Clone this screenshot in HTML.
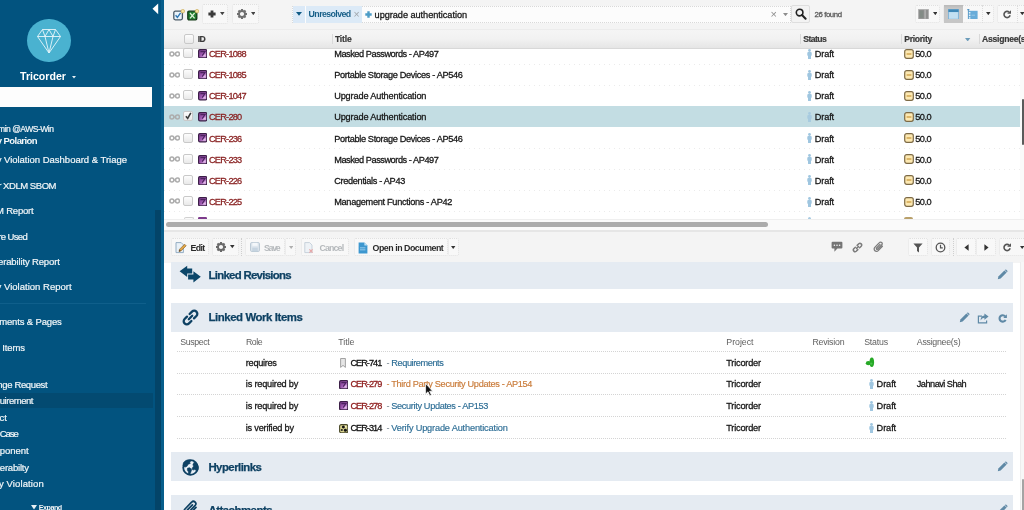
<!DOCTYPE html>
<html><head><meta charset="utf-8"><title>Polarion</title>
<style>
*{margin:0;padding:0;box-sizing:border-box}
html,body{width:1024px;height:510px;overflow:hidden;background:#fff;font-family:"Liberation Sans",sans-serif;}
.a{position:absolute}
#sb{will-change:transform;position:absolute;left:0;top:0;width:164px;height:510px;background:#02537f;overflow:hidden}
#sb .t{position:absolute;color:#f4f8fa;font-size:9.5px;white-space:nowrap;text-align:right;left:-200px;line-height:12px;height:12px}
#main{will-change:transform;position:absolute;left:164px;top:0;width:860px;height:510px;background:#fff;overflow:hidden}
.tx{position:absolute;white-space:nowrap;line-height:12px;height:12px}
.btn{position:absolute;border:1px dotted #e0e0e0;background:#f8f8f8;border-radius:2px}
.sec{position:absolute;left:7px;width:842px;background:#e3eaf3}
.hl{position:absolute;height:1px;background:#e4e4e4;left:13px;width:829px}
.cb{position:absolute;width:10px;height:10px;border:1px solid #c9c9c9;border-radius:2px;background:linear-gradient(#fdfdfd,#e9e9e9)}
</style></head><body>

<div id="sb">
<div class="a" style="left:161px;top:0;width:3px;height:510px;background:#075e8b"></div>
<div class="a" style="left:155px;top:210px;width:5.5px;height:300px;background:#034468"></div>
<svg class="a" style="left:152px;top:3px" width="7" height="12" viewBox="0 0 7 12"><path d="M6.2 0.4 L6.2 11.2 L0.5 5.8 Z" fill="#fff"/></svg>
<div class="a" style="left:27.2px;top:18.5px;width:43.6px;height:43.6px;border-radius:21.8px;background:#4ab2d0"></div>
<svg class="a" style="left:36px;top:28px" width="26" height="26" viewBox="0 0 26 26" fill="none" stroke="#e8f6fb" stroke-width="0.9" stroke-linejoin="round"><path d="M6.5 1.5 H19.5 L24.5 8.5 L13 25 L1.5 8.5 Z"/><path d="M1.5 8.5 H24.5"/><path d="M6.5 1.5 L9 8.5 L13 25 L17 8.5 L19.5 1.5"/><path d="M9 8.5 L13 1.5 L17 8.5"/></svg>
<div class="a" style="left:20px;top:69px;color:#fff;font-weight:bold;font-size:10.6px;line-height:14px;white-space:nowrap">Tricorder</div>
<svg class="a" style="left:71.6px;top:75.6px" width="4" height="3" viewBox="0 0 4 3"><path d="M0 0 H4 L2 2.6 Z" fill="#e8f0f5"/></svg>
<div class="a" style="left:0;top:87px;width:152px;height:20px;background:#fdfdfd"></div>
<div class="a" style="left:0;top:303px;width:146px;height:1px;background:#0f5f8b"></div>
<div class="a" style="left:0;top:393px;width:153px;height:15px;background:#034a71"></div>
<div class="t" style="width:253.52px;top:123.0px;font-size:8.5px;letter-spacing:-0.478px;-webkit-text-stroke:0.2px #eef3f6;">Admin @AWS-Win</div>
<div class="t" style="width:237.03px;top:135.0px;font-size:9.5px;font-weight:bold;letter-spacing:-0.572px;">My Polarion</div>
<div class="t" style="width:326.99px;top:154.0px;font-size:9.5px;letter-spacing:-0.015px;-webkit-text-stroke:0.2px #eef3f6;">Security Violation Dashboard &amp; Triage</div>
<div class="t" style="width:256.05px;top:179.5px;font-size:9.5px;letter-spacing:-0.451px;-webkit-text-stroke:0.2px #eef3f6;">Tricorder XDLM SBOM</div>
<div class="t" style="width:233.50px;top:205.0px;font-size:9.5px;letter-spacing:-0.203px;-webkit-text-stroke:0.2px #eef3f6;">SBOM Report</div>
<div class="t" style="width:227.17px;top:230.9px;font-size:9.5px;letter-spacing:-0.626px;-webkit-text-stroke:0.2px #eef3f6;">Where Used</div>
<div class="t" style="width:259.66px;top:256.0px;font-size:9.5px;letter-spacing:-0.143px;-webkit-text-stroke:0.2px #eef3f6;">Vulnerability Report</div>
<div class="t" style="width:271.61px;top:281.1px;font-size:9.5px;letter-spacing:0.012px;-webkit-text-stroke:0.2px #eef3f6;">Security Violation Report</div>
<div class="t" style="width:261.65px;top:315.8px;font-size:9.5px;letter-spacing:-0.152px;-webkit-text-stroke:0.2px #eef3f6;">Documents &amp; Pages</div>
<div class="t" style="width:224.89px;top:341.8px;font-size:9.5px;letter-spacing:-0.106px;-webkit-text-stroke:0.2px #eef3f6;">Work Items</div>
<div class="t" style="width:247.24px;top:378.5px;font-size:9.5px;letter-spacing:-0.364px;-webkit-text-stroke:0.2px #eef3f6;">Change Request</div>
<div class="t" style="width:232.92px;top:395.2px;font-size:9.5px;letter-spacing:-0.48px;-webkit-text-stroke:0.2px #eef3f6;">Requirement</div>
<div class="t" style="width:207.00px;top:411.5px;font-size:9.5px;-webkit-text-stroke:0.2px #eef3f6;">Defect</div>
<div class="t" style="width:217.74px;top:428.2px;font-size:9.5px;letter-spacing:-1.059px;-webkit-text-stroke:0.2px #eef3f6;">Test Case</div>
<div class="t" style="width:228.69px;top:445.2px;font-size:9.5px;letter-spacing:-0.011px;-webkit-text-stroke:0.2px #eef3f6;">Component</div>
<div class="t" style="width:228.80px;top:461.7px;font-size:9.5px;letter-spacing:-0.204px;-webkit-text-stroke:0.2px #eef3f6;">Vulnerabilty</div>
<div class="t" style="width:243.92px;top:477.9px;font-size:9.5px;letter-spacing:0.116px;-webkit-text-stroke:0.2px #eef3f6;">Security Violation</div>
<svg class="a" style="left:31px;top:505px" width="6" height="5" viewBox="0 0 6 5"><path d="M0 0 H6 L3 4.5 Z" fill="#e8f0f5"/></svg>
<div class="a" style="left:38.8px;top:502.6px;color:#eef3f6;font-weight:bold;font-size:7.2px;letter-spacing:-0.501px;line-height:10px;white-space:nowrap">Expand</div>
</div>
<div id="main">
<svg width="0" height="0" style="position:absolute"><defs><linearGradient id="gwi" x1="0" y1="0" x2="1" y2="1"><stop offset="0" stop-color="#7a3a8c"/><stop offset="0.45" stop-color="#9a55ac"/><stop offset="1" stop-color="#dcaae6"/></linearGradient></defs></svg>
<div class="a" style="left:0.0px;top:0.0px;width:860.0px;height:30.0px;background:#f4f4f4;"></div>
<div class="a" style="left:0.0px;top:29.0px;width:860.0px;height:1.0px;background:#ececec;"></div>
<svg class="a" style="left:8.5px;top:8.5px" width="12" height="12" viewBox="0 0 12 12"><rect x="0.8" y="2.2" width="8.6" height="8.6" rx="1.5" fill="#eaf3fa" stroke="#4a5a66" stroke-width="1.3"/><path d="M2.6 6.2 L4.4 8.4 L7.6 3.8" fill="none" stroke="#2f78b5" stroke-width="1.4"/><circle cx="9.8" cy="2.2" r="1.8" fill="#f6e3a0" stroke="#c8a64a" stroke-width="0.6"/></svg>
<svg class="a" style="left:22.5px;top:8.5px" width="12" height="12" viewBox="0 0 12 12"><rect x="0.8" y="2.2" width="9" height="8.6" rx="1.2" fill="#1f7a2d" stroke="#123a17" stroke-width="1.3"/><path d="M3 4 L7.6 9.4 M7.6 4 L3 9.4" stroke="#d9f2d5" stroke-width="1.3"/><circle cx="10" cy="2.2" r="1.8" fill="#f6e3a0" stroke="#c8a64a" stroke-width="0.6"/></svg>
<div class="btn" style="left:38.4px;top:4.3px;width:26.1px;height:19.3px;"></div>
<svg class="a" style="left:43.6px;top:10.2px" width="8" height="8" viewBox="0 0 8 8"><path d="M2.6 0.4 H5.4 V2.6 H7.6 V5.4 H5.4 V7.6 H2.6 V5.4 H0.4 V2.6 H2.6 Z" fill="#3a3a3a"/></svg>
<svg class="a" style="left:56.3px;top:11.9px" width="4.6" height="3.2" viewBox="0 0 4.6 3.2"><path d="M0 0 H4.6 L2.3 3.2 Z" fill="#444"/></svg>
<div class="btn" style="left:68.2px;top:4.3px;width:26.6px;height:19.3px;"></div>
<svg class="a" style="left:71.6px;top:8.0px" width="12" height="12" viewBox="0 0 12 12"><g transform="translate(6 6)"><rect x="-1.05" y="-5.0" width="2.1" height="2.4" transform="rotate(0)" fill="#707070"/><rect x="-1.05" y="-5.0" width="2.1" height="2.4" transform="rotate(45)" fill="#707070"/><rect x="-1.05" y="-5.0" width="2.1" height="2.4" transform="rotate(90)" fill="#707070"/><rect x="-1.05" y="-5.0" width="2.1" height="2.4" transform="rotate(135)" fill="#707070"/><rect x="-1.05" y="-5.0" width="2.1" height="2.4" transform="rotate(180)" fill="#707070"/><rect x="-1.05" y="-5.0" width="2.1" height="2.4" transform="rotate(225)" fill="#707070"/><rect x="-1.05" y="-5.0" width="2.1" height="2.4" transform="rotate(270)" fill="#707070"/><rect x="-1.05" y="-5.0" width="2.1" height="2.4" transform="rotate(315)" fill="#707070"/><circle r="3.0" fill="none" stroke="#707070" stroke-width="1.8"/></g></svg>
<svg class="a" style="left:86.7px;top:11.9px" width="4.6" height="3.2" viewBox="0 0 4.6 3.2"><path d="M0 0 H4.6 L2.3 3.2 Z" fill="#444"/></svg>
<div class="a" style="left:128.0px;top:5.8px;width:499.0px;height:17.6px;background:#fcfcfc;border:1px dotted #d9d9d9;"></div>
<div class="a" style="left:128.5px;top:6.3px;width:12.0px;height:16.6px;background:#dbe9f7;"></div>
<svg class="a" style="left:132.0px;top:12.3px" width="6" height="3.8" viewBox="0 0 6 3.8"><path d="M0 0 H6 L3.0 3.8 Z" fill="#0f5a85"/></svg>
<div class="a" style="left:141.8px;top:6.3px;width:56.0px;height:16.6px;background:#dceaf7;"></div>
<div class="tx" style="left:144.6px;top:8.2px;font-size:8.8px;color:#185f88;font-weight:bold;letter-spacing:-0.592px;">Unresolved</div>
<div class="tx" style="left:189.6px;top:7.7px;font-size:10.5px;color:#a0a6ab;">×</div>
<svg class="a" style="left:201.2px;top:10.8px" width="7" height="7" viewBox="0 0 7 7"><path d="M2.3 0.3 H4.7 V2.3 H6.7 V4.7 H4.7 V6.7 H2.3 V4.7 H0.3 V2.3 H2.3 Z" fill="#4c9cc6"/></svg>
<div class="tx" style="left:210.6px;top:8.6px;font-size:9.2px;color:#161616;letter-spacing:-0.048px;-webkit-text-stroke:0.28px #161616;">upgrade authentication</div>
<div class="tx" style="left:606.6px;top:7.7px;font-size:11px;color:#8d8d8d;">×</div>
<svg class="a" style="left:618.5px;top:13.0px" width="5" height="3.2" viewBox="0 0 5 3.2"><path d="M0 0 H5 L2.5 3.2 Z" fill="#8d8d8d"/></svg>
<div class="btn" style="left:626.6px;top:4.6px;width:19.4px;height:18.6px;border:1px solid #dedede;background:#f3f3f3;"></div>
<svg class="a" style="left:630.5px;top:8.3px" width="12" height="12" viewBox="0 0 12 12"><circle cx="4.6" cy="4.6" r="3.3" fill="none" stroke="#222" stroke-width="1.6"/><path d="M7 7 L10.6 10.8" stroke="#222" stroke-width="2" stroke-linecap="round"/></svg>
<div class="tx" style="left:650.6px;top:8.7px;font-size:7.8px;color:#5a5a5a;letter-spacing:-0.423px;-webkit-text-stroke:0.28px #5a5a5a;">26 found</div>
<div class="btn" style="left:750.6px;top:4.6px;width:25.8px;height:18.6px;"></div>
<svg class="a" style="left:754.0px;top:8.6px" width="11" height="10.4" viewBox="0 0 11 10.4"><rect x="0.3" y="0.3" width="10.4" height="9.8" fill="#8f8f8f" stroke="#b5b5b5" stroke-width="0.6"/><rect x="6.6" y="0.6" width="0.9" height="9.2" fill="#c9c9c9"/><rect x="1.6" y="1.6" width="3.8" height="7.2" fill="#838b86"/></svg>
<svg class="a" style="left:768.5px;top:11.6px" width="4.6" height="3.2" viewBox="0 0 4.6 3.2"><path d="M0 0 H4.6 L2.3 3.2 Z" fill="#333"/></svg>
<div class="btn" style="left:779.4px;top:4.6px;width:50.9px;height:18.6px;"></div>
<div class="a" style="left:779.8px;top:5.2px;width:19.2px;height:17.6px;background:linear-gradient(#b9b9b9,#c6c6c6 18%,#c6c6c6);"></div>
<svg class="a" style="left:783.8px;top:8.6px" width="11" height="10.6" viewBox="0 0 11 10.6"><rect x="0.4" y="0.4" width="10.2" height="9.8" fill="#b4d8ef" stroke="#79b0d6" stroke-width="0.8"/><rect x="0.4" y="0.4" width="10.2" height="2.6" fill="#3f88b7"/><rect x="1.2" y="3.6" width="8.6" height="5.8" fill="#c3e0f2"/></svg>
<svg class="a" style="left:802.8px;top:8.6px" width="11" height="10.8" viewBox="0 0 11 10.8"><rect x="1.6" y="1.8" width="9" height="8.4" fill="#68acd9"/><rect x="0.9" y="0" width="0.9" height="10.8" fill="#4a8fc0"/><rect x="0.2" y="0.2" width="2.2" height="1" fill="#4a8fc0"/><rect x="1.9" y="3" width="1.5" height="1.5" fill="#e9f4fb"/><rect x="1.9" y="5.6" width="1.5" height="1.5" fill="#e9f4fb"/><rect x="1.9" y="8.2" width="1.5" height="1.5" fill="#e9f4fb"/><rect x="4.6" y="5.8" width="3.4" height="0.7" fill="#a9d2ee"/></svg>
<div class="a" style="left:818.3px;top:5.2px;width:1.0px;height:17.6px;background:transparent;border-left:1px dotted #dcdcdc;"></div>
<svg class="a" style="left:822.1px;top:11.6px" width="4.6" height="3.2" viewBox="0 0 4.6 3.2"><path d="M0 0 H4.6 L2.3 3.2 Z" fill="#333"/></svg>
<div class="btn" style="left:833.2px;top:4.6px;width:28.8px;height:18.6px;"></div>
<div class="a" style="left:852.5px;top:5.2px;width:1.0px;height:17.6px;background:transparent;border-left:1px dotted #dcdcdc;"></div>
<svg class="a" style="left:836.8px;top:7.8px" width="12" height="12" viewBox="0 0 12 12"><g transform="translate(6 6.4)"><path d="M2.23 -2.17 A3.1 3.1 0 1 0 3.1 0.93" fill="none" stroke="#555" stroke-width="1.6"/><path d="M4.00 -4.20 V-0.6 H0.10 Z" fill="#555"/></g></svg>
<svg class="a" style="left:856.1px;top:11.6px" width="4.6" height="3.2" viewBox="0 0 4.6 3.2"><path d="M0 0 H4.6 L2.3 3.2 Z" fill="#333"/></svg>
<div class="a" style="left:0.0px;top:30.0px;width:860.0px;height:18.6px;background:linear-gradient(#f5f5f5,#f2f2f2 45%,#e4e4e4);"></div>
<div class="a" style="left:0.0px;top:48.4px;width:860.0px;height:1.0px;background:#d8d8d8;"></div>
<div class="cb" style="left:19.80000000000001px;top:34px"></div>
<div class="tx" style="left:33.7px;top:33.0px;font-size:8.6px;color:#3a3a3a;font-weight:bold;letter-spacing:-0.6px;-webkit-text-stroke:0.2px #3a3a3a;">ID</div>
<div class="a" style="left:167.5px;top:34.0px;width:1.0px;height:9.6px;background:#d9d9d9;"></div>
<div class="a" style="left:636.0px;top:34.0px;width:1.0px;height:9.6px;background:#d9d9d9;"></div>
<div class="a" style="left:737.0px;top:34.0px;width:1.0px;height:9.6px;background:#d9d9d9;"></div>
<div class="a" style="left:815.0px;top:34.0px;width:1.0px;height:9.6px;background:#d9d9d9;"></div>
<div class="tx" style="left:170.9px;top:33.0px;font-size:8.6px;color:#3a3a3a;font-weight:bold;letter-spacing:-0.181px;-webkit-text-stroke:0.2px #3a3a3a;">Title</div>
<div class="tx" style="left:639.2px;top:33.0px;font-size:8.6px;color:#3a3a3a;font-weight:bold;letter-spacing:-0.537px;-webkit-text-stroke:0.2px #3a3a3a;">Status</div>
<div class="tx" style="left:740.2px;top:33.0px;font-size:8.6px;color:#3a3a3a;font-weight:bold;letter-spacing:-0.287px;-webkit-text-stroke:0.2px #3a3a3a;">Priority</div>
<svg class="a" style="left:801.3px;top:37.8px" width="5.4" height="3.4" viewBox="0 0 5.4 3.4"><path d="M0 0 H5.4 L2.7 3.4 Z" fill="#6c9cba"/></svg>
<div class="tx" style="left:818.0px;top:33.0px;font-size:8.6px;color:#3a3a3a;font-weight:bold;letter-spacing:-0.25px;-webkit-text-stroke:0.2px #3a3a3a;">Assignee(s)</div>
<div class="a" style="left:0.0px;top:63.6px;width:856.0px;height:1.0px;background:repeating-linear-gradient(90deg,#ebebeb 0,#ebebeb 1px,transparent 1px,transparent 5px);"></div>
<svg class="a" style="left:4.9px;top:50.6px" width="11.4" height="6" viewBox="0 0 11.4 6"><g fill="none" stroke="#adadad" stroke-width="1.55"><circle cx="2.9" cy="3" r="1.95"/><circle cx="8.5" cy="3" r="1.95"/></g><rect x="4.4" y="2.3" width="2.6" height="1.4" fill="#adadad"/></svg>
<div class="cb" style="left:19.4px;top:48.1px"></div>
<svg class="a" style="left:33.7px;top:49.0px" width="9.4" height="9.4" viewBox="0 0 9.4 9.4"><rect x="0.6" y="0.6" width="8.2" height="8.2" rx="1.3" fill="url(#gwi)" stroke="#3b1f47" stroke-width="1.2"/><path d="M2.4 2.6 H7 L4.2 6.6" fill="none" stroke="#4d2360" stroke-width="1.1"/><path d="M4.6 7.4 L7.6 4.4 V7.4 Z" fill="#edcdf3" opacity="0.8"/></svg>
<div class="tx" style="left:45.0px;top:48.1px;font-size:9.2px;color:#8a2424;letter-spacing:-0.765px;-webkit-text-stroke:0.28px #8a2424;">CER-1088</div>
<div class="tx" style="left:170.2px;top:48.1px;font-size:9.2px;color:#161616;letter-spacing:-0.446px;-webkit-text-stroke:0.28px #161616;">Masked Passwords - AP497</div>
<svg class="a" style="left:643.0px;top:48.8px" width="5" height="10" viewBox="0 0 5 10"><g fill="#9fc6e0" opacity="1"><circle cx="2.5" cy="1.5" r="1.4"/><rect x="0.3" y="3" width="4.4" height="4" rx="1"/><rect x="1" y="6" width="3" height="4" rx="0.6"/></g></svg>
<div class="tx" style="left:650.8px;top:48.1px;font-size:9.2px;color:#161616;letter-spacing:-0.134px;-webkit-text-stroke:0.28px #161616;">Draft</div>
<svg class="a" style="left:739.5px;top:48.8px" width="10" height="10" viewBox="0 0 10 10"><rect x="0.7" y="0.7" width="8.6" height="8.6" rx="2" fill="#fde9b2" stroke="#7d6a45" stroke-width="1.2"/><rect x="2.6" y="4.4" width="4.8" height="1.2" fill="#c9973a"/></svg>
<div class="tx" style="left:751.2px;top:48.1px;font-size:9.2px;color:#161616;letter-spacing:-0.502px;-webkit-text-stroke:0.28px #161616;">50.0</div>
<div class="a" style="left:0.0px;top:84.7px;width:856.0px;height:1.0px;background:repeating-linear-gradient(90deg,#ebebeb 0,#ebebeb 1px,transparent 1px,transparent 5px);"></div>
<svg class="a" style="left:4.9px;top:71.7px" width="11.4" height="6" viewBox="0 0 11.4 6"><g fill="none" stroke="#adadad" stroke-width="1.55"><circle cx="2.9" cy="3" r="1.95"/><circle cx="8.5" cy="3" r="1.95"/></g><rect x="4.4" y="2.3" width="2.6" height="1.4" fill="#adadad"/></svg>
<div class="cb" style="left:19.4px;top:69.2px"></div>
<svg class="a" style="left:33.7px;top:70.1px" width="9.4" height="9.4" viewBox="0 0 9.4 9.4"><rect x="0.6" y="0.6" width="8.2" height="8.2" rx="1.3" fill="url(#gwi)" stroke="#3b1f47" stroke-width="1.2"/><path d="M2.4 2.6 H7 L4.2 6.6" fill="none" stroke="#4d2360" stroke-width="1.1"/><path d="M4.6 7.4 L7.6 4.4 V7.4 Z" fill="#edcdf3" opacity="0.8"/></svg>
<div class="tx" style="left:45.0px;top:69.2px;font-size:9.2px;color:#8a2424;letter-spacing:-0.765px;-webkit-text-stroke:0.28px #8a2424;">CER-1085</div>
<div class="tx" style="left:170.2px;top:69.2px;font-size:9.2px;color:#161616;letter-spacing:-0.346px;-webkit-text-stroke:0.28px #161616;">Portable Storage Devices - AP546</div>
<svg class="a" style="left:643.0px;top:69.9px" width="5" height="10" viewBox="0 0 5 10"><g fill="#9fc6e0" opacity="1"><circle cx="2.5" cy="1.5" r="1.4"/><rect x="0.3" y="3" width="4.4" height="4" rx="1"/><rect x="1" y="6" width="3" height="4" rx="0.6"/></g></svg>
<div class="tx" style="left:650.8px;top:69.2px;font-size:9.2px;color:#161616;letter-spacing:-0.134px;-webkit-text-stroke:0.28px #161616;">Draft</div>
<svg class="a" style="left:739.5px;top:69.9px" width="10" height="10" viewBox="0 0 10 10"><rect x="0.7" y="0.7" width="8.6" height="8.6" rx="2" fill="#fde9b2" stroke="#7d6a45" stroke-width="1.2"/><rect x="2.6" y="4.4" width="4.8" height="1.2" fill="#c9973a"/></svg>
<div class="tx" style="left:751.2px;top:69.2px;font-size:9.2px;color:#161616;letter-spacing:-0.502px;-webkit-text-stroke:0.28px #161616;">50.0</div>
<div class="a" style="left:0.0px;top:105.8px;width:856.0px;height:1.0px;background:repeating-linear-gradient(90deg,#ebebeb 0,#ebebeb 1px,transparent 1px,transparent 5px);"></div>
<svg class="a" style="left:4.9px;top:92.8px" width="11.4" height="6" viewBox="0 0 11.4 6"><g fill="none" stroke="#adadad" stroke-width="1.55"><circle cx="2.9" cy="3" r="1.95"/><circle cx="8.5" cy="3" r="1.95"/></g><rect x="4.4" y="2.3" width="2.6" height="1.4" fill="#adadad"/></svg>
<div class="cb" style="left:19.4px;top:90.3px"></div>
<svg class="a" style="left:33.7px;top:91.2px" width="9.4" height="9.4" viewBox="0 0 9.4 9.4"><rect x="0.6" y="0.6" width="8.2" height="8.2" rx="1.3" fill="url(#gwi)" stroke="#3b1f47" stroke-width="1.2"/><path d="M2.4 2.6 H7 L4.2 6.6" fill="none" stroke="#4d2360" stroke-width="1.1"/><path d="M4.6 7.4 L7.6 4.4 V7.4 Z" fill="#edcdf3" opacity="0.8"/></svg>
<div class="tx" style="left:45.0px;top:90.3px;font-size:9.2px;color:#8a2424;letter-spacing:-0.765px;-webkit-text-stroke:0.28px #8a2424;">CER-1047</div>
<div class="tx" style="left:170.2px;top:90.3px;font-size:9.2px;color:#161616;letter-spacing:-0.155px;-webkit-text-stroke:0.28px #161616;">Upgrade Authentication</div>
<svg class="a" style="left:643.0px;top:91.0px" width="5" height="10" viewBox="0 0 5 10"><g fill="#9fc6e0" opacity="1"><circle cx="2.5" cy="1.5" r="1.4"/><rect x="0.3" y="3" width="4.4" height="4" rx="1"/><rect x="1" y="6" width="3" height="4" rx="0.6"/></g></svg>
<div class="tx" style="left:650.8px;top:90.3px;font-size:9.2px;color:#161616;letter-spacing:-0.134px;-webkit-text-stroke:0.28px #161616;">Draft</div>
<svg class="a" style="left:739.5px;top:91.0px" width="10" height="10" viewBox="0 0 10 10"><rect x="0.7" y="0.7" width="8.6" height="8.6" rx="2" fill="#fde9b2" stroke="#7d6a45" stroke-width="1.2"/><rect x="2.6" y="4.4" width="4.8" height="1.2" fill="#c9973a"/></svg>
<div class="tx" style="left:751.2px;top:90.3px;font-size:9.2px;color:#161616;letter-spacing:-0.502px;-webkit-text-stroke:0.28px #161616;">50.0</div>
<div class="a" style="left:0.0px;top:106.4px;width:856.0px;height:20.6px;background:#c3dde3;"></div>
<svg class="a" style="left:4.9px;top:113.9px" width="11.4" height="6" viewBox="0 0 11.4 6"><g fill="none" stroke="#adadad" stroke-width="1.55"><circle cx="2.9" cy="3" r="1.95"/><circle cx="8.5" cy="3" r="1.95"/></g><rect x="4.4" y="2.3" width="2.6" height="1.4" fill="#adadad"/></svg>
<div class="cb" style="left:19.4px;top:111.4px"></div>
<svg class="a" style="left:21.4px;top:112.2px" width="7" height="8" viewBox="0 0 7 8"><path d="M0.9 4.2 L2.7 6.4 L5.8 0.9" fill="none" stroke="#3c3c3c" stroke-width="1.6"/></svg>
<svg class="a" style="left:33.7px;top:112.3px" width="9.4" height="9.4" viewBox="0 0 9.4 9.4"><rect x="0.6" y="0.6" width="8.2" height="8.2" rx="1.3" fill="url(#gwi)" stroke="#3b1f47" stroke-width="1.2"/><path d="M2.4 2.6 H7 L4.2 6.6" fill="none" stroke="#4d2360" stroke-width="1.1"/><path d="M4.6 7.4 L7.6 4.4 V7.4 Z" fill="#edcdf3" opacity="0.8"/></svg>
<div class="tx" style="left:45.0px;top:111.4px;font-size:9.2px;color:#8a2424;letter-spacing:-0.765px;-webkit-text-stroke:0.28px #8a2424;">CER-280</div>
<div class="tx" style="left:170.2px;top:111.4px;font-size:9.2px;color:#161616;letter-spacing:-0.155px;-webkit-text-stroke:0.28px #161616;">Upgrade Authentication</div>
<svg class="a" style="left:643.0px;top:112.1px" width="5" height="10" viewBox="0 0 5 10"><g fill="#9fc6e0" opacity="0.75"><circle cx="2.5" cy="1.5" r="1.4"/><rect x="0.3" y="3" width="4.4" height="4" rx="1"/><rect x="1" y="6" width="3" height="4" rx="0.6"/></g></svg>
<div class="tx" style="left:650.8px;top:111.4px;font-size:9.2px;color:#161616;letter-spacing:-0.134px;-webkit-text-stroke:0.28px #161616;">Draft</div>
<svg class="a" style="left:739.5px;top:112.1px" width="10" height="10" viewBox="0 0 10 10"><rect x="0.7" y="0.7" width="8.6" height="8.6" rx="2" fill="#fde9b2" stroke="#7d6a45" stroke-width="1.2"/><rect x="2.6" y="4.4" width="4.8" height="1.2" fill="#c9973a"/></svg>
<div class="tx" style="left:751.2px;top:111.4px;font-size:9.2px;color:#161616;letter-spacing:-0.502px;-webkit-text-stroke:0.28px #161616;">50.0</div>
<div class="a" style="left:0.0px;top:148.0px;width:856.0px;height:1.0px;background:repeating-linear-gradient(90deg,#ebebeb 0,#ebebeb 1px,transparent 1px,transparent 5px);"></div>
<svg class="a" style="left:4.9px;top:135.0px" width="11.4" height="6" viewBox="0 0 11.4 6"><g fill="none" stroke="#adadad" stroke-width="1.55"><circle cx="2.9" cy="3" r="1.95"/><circle cx="8.5" cy="3" r="1.95"/></g><rect x="4.4" y="2.3" width="2.6" height="1.4" fill="#adadad"/></svg>
<div class="cb" style="left:19.4px;top:132.5px"></div>
<svg class="a" style="left:33.7px;top:133.4px" width="9.4" height="9.4" viewBox="0 0 9.4 9.4"><rect x="0.6" y="0.6" width="8.2" height="8.2" rx="1.3" fill="url(#gwi)" stroke="#3b1f47" stroke-width="1.2"/><path d="M2.4 2.6 H7 L4.2 6.6" fill="none" stroke="#4d2360" stroke-width="1.1"/><path d="M4.6 7.4 L7.6 4.4 V7.4 Z" fill="#edcdf3" opacity="0.8"/></svg>
<div class="tx" style="left:45.0px;top:132.5px;font-size:9.2px;color:#8a2424;letter-spacing:-0.765px;-webkit-text-stroke:0.28px #8a2424;">CER-236</div>
<div class="tx" style="left:170.2px;top:132.5px;font-size:9.2px;color:#161616;letter-spacing:-0.346px;-webkit-text-stroke:0.28px #161616;">Portable Storage Devices - AP546</div>
<svg class="a" style="left:643.0px;top:133.2px" width="5" height="10" viewBox="0 0 5 10"><g fill="#9fc6e0" opacity="1"><circle cx="2.5" cy="1.5" r="1.4"/><rect x="0.3" y="3" width="4.4" height="4" rx="1"/><rect x="1" y="6" width="3" height="4" rx="0.6"/></g></svg>
<div class="tx" style="left:650.8px;top:132.5px;font-size:9.2px;color:#161616;letter-spacing:-0.134px;-webkit-text-stroke:0.28px #161616;">Draft</div>
<svg class="a" style="left:739.5px;top:133.2px" width="10" height="10" viewBox="0 0 10 10"><rect x="0.7" y="0.7" width="8.6" height="8.6" rx="2" fill="#fde9b2" stroke="#7d6a45" stroke-width="1.2"/><rect x="2.6" y="4.4" width="4.8" height="1.2" fill="#c9973a"/></svg>
<div class="tx" style="left:751.2px;top:132.5px;font-size:9.2px;color:#161616;letter-spacing:-0.502px;-webkit-text-stroke:0.28px #161616;">50.0</div>
<div class="a" style="left:0.0px;top:169.0px;width:856.0px;height:1.0px;background:repeating-linear-gradient(90deg,#ebebeb 0,#ebebeb 1px,transparent 1px,transparent 5px);"></div>
<svg class="a" style="left:4.9px;top:156.1px" width="11.4" height="6" viewBox="0 0 11.4 6"><g fill="none" stroke="#adadad" stroke-width="1.55"><circle cx="2.9" cy="3" r="1.95"/><circle cx="8.5" cy="3" r="1.95"/></g><rect x="4.4" y="2.3" width="2.6" height="1.4" fill="#adadad"/></svg>
<div class="cb" style="left:19.4px;top:153.6px"></div>
<svg class="a" style="left:33.7px;top:154.5px" width="9.4" height="9.4" viewBox="0 0 9.4 9.4"><rect x="0.6" y="0.6" width="8.2" height="8.2" rx="1.3" fill="url(#gwi)" stroke="#3b1f47" stroke-width="1.2"/><path d="M2.4 2.6 H7 L4.2 6.6" fill="none" stroke="#4d2360" stroke-width="1.1"/><path d="M4.6 7.4 L7.6 4.4 V7.4 Z" fill="#edcdf3" opacity="0.8"/></svg>
<div class="tx" style="left:45.0px;top:153.6px;font-size:9.2px;color:#8a2424;letter-spacing:-0.765px;-webkit-text-stroke:0.28px #8a2424;">CER-233</div>
<div class="tx" style="left:170.2px;top:153.6px;font-size:9.2px;color:#161616;letter-spacing:-0.446px;-webkit-text-stroke:0.28px #161616;">Masked Passwords - AP497</div>
<svg class="a" style="left:643.0px;top:154.3px" width="5" height="10" viewBox="0 0 5 10"><g fill="#9fc6e0" opacity="1"><circle cx="2.5" cy="1.5" r="1.4"/><rect x="0.3" y="3" width="4.4" height="4" rx="1"/><rect x="1" y="6" width="3" height="4" rx="0.6"/></g></svg>
<div class="tx" style="left:650.8px;top:153.6px;font-size:9.2px;color:#161616;letter-spacing:-0.134px;-webkit-text-stroke:0.28px #161616;">Draft</div>
<svg class="a" style="left:739.5px;top:154.3px" width="10" height="10" viewBox="0 0 10 10"><rect x="0.7" y="0.7" width="8.6" height="8.6" rx="2" fill="#fde9b2" stroke="#7d6a45" stroke-width="1.2"/><rect x="2.6" y="4.4" width="4.8" height="1.2" fill="#c9973a"/></svg>
<div class="tx" style="left:751.2px;top:153.6px;font-size:9.2px;color:#161616;letter-spacing:-0.502px;-webkit-text-stroke:0.28px #161616;">50.0</div>
<div class="a" style="left:0.0px;top:190.2px;width:856.0px;height:1.0px;background:repeating-linear-gradient(90deg,#ebebeb 0,#ebebeb 1px,transparent 1px,transparent 5px);"></div>
<svg class="a" style="left:4.9px;top:177.2px" width="11.4" height="6" viewBox="0 0 11.4 6"><g fill="none" stroke="#adadad" stroke-width="1.55"><circle cx="2.9" cy="3" r="1.95"/><circle cx="8.5" cy="3" r="1.95"/></g><rect x="4.4" y="2.3" width="2.6" height="1.4" fill="#adadad"/></svg>
<div class="cb" style="left:19.4px;top:174.7px"></div>
<svg class="a" style="left:33.7px;top:175.6px" width="9.4" height="9.4" viewBox="0 0 9.4 9.4"><rect x="0.6" y="0.6" width="8.2" height="8.2" rx="1.3" fill="url(#gwi)" stroke="#3b1f47" stroke-width="1.2"/><path d="M2.4 2.6 H7 L4.2 6.6" fill="none" stroke="#4d2360" stroke-width="1.1"/><path d="M4.6 7.4 L7.6 4.4 V7.4 Z" fill="#edcdf3" opacity="0.8"/></svg>
<div class="tx" style="left:45.0px;top:174.7px;font-size:9.2px;color:#8a2424;letter-spacing:-0.765px;-webkit-text-stroke:0.28px #8a2424;">CER-226</div>
<div class="tx" style="left:170.2px;top:174.7px;font-size:9.2px;color:#161616;letter-spacing:-0.324px;-webkit-text-stroke:0.28px #161616;">Credentials - AP43</div>
<svg class="a" style="left:643.0px;top:175.4px" width="5" height="10" viewBox="0 0 5 10"><g fill="#9fc6e0" opacity="1"><circle cx="2.5" cy="1.5" r="1.4"/><rect x="0.3" y="3" width="4.4" height="4" rx="1"/><rect x="1" y="6" width="3" height="4" rx="0.6"/></g></svg>
<div class="tx" style="left:650.8px;top:174.7px;font-size:9.2px;color:#161616;letter-spacing:-0.134px;-webkit-text-stroke:0.28px #161616;">Draft</div>
<svg class="a" style="left:739.5px;top:175.4px" width="10" height="10" viewBox="0 0 10 10"><rect x="0.7" y="0.7" width="8.6" height="8.6" rx="2" fill="#fde9b2" stroke="#7d6a45" stroke-width="1.2"/><rect x="2.6" y="4.4" width="4.8" height="1.2" fill="#c9973a"/></svg>
<div class="tx" style="left:751.2px;top:174.7px;font-size:9.2px;color:#161616;letter-spacing:-0.502px;-webkit-text-stroke:0.28px #161616;">50.0</div>
<div class="a" style="left:0.0px;top:211.2px;width:856.0px;height:1.0px;background:repeating-linear-gradient(90deg,#ebebeb 0,#ebebeb 1px,transparent 1px,transparent 5px);"></div>
<svg class="a" style="left:4.9px;top:198.3px" width="11.4" height="6" viewBox="0 0 11.4 6"><g fill="none" stroke="#adadad" stroke-width="1.55"><circle cx="2.9" cy="3" r="1.95"/><circle cx="8.5" cy="3" r="1.95"/></g><rect x="4.4" y="2.3" width="2.6" height="1.4" fill="#adadad"/></svg>
<div class="cb" style="left:19.4px;top:195.8px"></div>
<svg class="a" style="left:33.7px;top:196.7px" width="9.4" height="9.4" viewBox="0 0 9.4 9.4"><rect x="0.6" y="0.6" width="8.2" height="8.2" rx="1.3" fill="url(#gwi)" stroke="#3b1f47" stroke-width="1.2"/><path d="M2.4 2.6 H7 L4.2 6.6" fill="none" stroke="#4d2360" stroke-width="1.1"/><path d="M4.6 7.4 L7.6 4.4 V7.4 Z" fill="#edcdf3" opacity="0.8"/></svg>
<div class="tx" style="left:45.0px;top:195.8px;font-size:9.2px;color:#8a2424;letter-spacing:-0.765px;-webkit-text-stroke:0.28px #8a2424;">CER-225</div>
<div class="tx" style="left:170.2px;top:195.8px;font-size:9.2px;color:#161616;letter-spacing:-0.304px;-webkit-text-stroke:0.28px #161616;">Management Functions - AP42</div>
<svg class="a" style="left:643.0px;top:196.5px" width="5" height="10" viewBox="0 0 5 10"><g fill="#9fc6e0" opacity="1"><circle cx="2.5" cy="1.5" r="1.4"/><rect x="0.3" y="3" width="4.4" height="4" rx="1"/><rect x="1" y="6" width="3" height="4" rx="0.6"/></g></svg>
<div class="tx" style="left:650.8px;top:195.8px;font-size:9.2px;color:#161616;letter-spacing:-0.134px;-webkit-text-stroke:0.28px #161616;">Draft</div>
<svg class="a" style="left:739.5px;top:196.5px" width="10" height="10" viewBox="0 0 10 10"><rect x="0.7" y="0.7" width="8.6" height="8.6" rx="2" fill="#fde9b2" stroke="#7d6a45" stroke-width="1.2"/><rect x="2.6" y="4.4" width="4.8" height="1.2" fill="#c9973a"/></svg>
<div class="tx" style="left:751.2px;top:195.8px;font-size:9.2px;color:#161616;letter-spacing:-0.502px;-webkit-text-stroke:0.28px #161616;">50.0</div>
<div class="a" style="left:19.80000000000001px;top:216.5px;width:10px;height:3px;border:1px solid #d0d0d0;border-bottom:none;border-radius:2px 2px 0 0;background:#fafafa"></div>
<div class="a" style="left:34.2px;top:216.6px;width:8.8px;height:2.4px;background:#7d3b8c;border-radius:1.3px 1.3px 0 0;"></div>
<div class="a" style="left:643.8px;top:217.4px;width:3.0px;height:1.6px;background:#a9cbe2;border-radius:1.5px 1.5px 0 0;"></div>
<div class="a" style="left:740.2px;top:217.2px;width:8.6px;height:1.8px;background:#b9a06a;border-radius:2px 2px 0 0;"></div>
<div class="a" style="left:856.0px;top:49.0px;width:4.0px;height:181.0px;background:#fafafa;"></div>
<div class="a" style="left:857.6px;top:99.0px;width:2.6px;height:46.0px;background:#5a5a5a;border-radius:1.3px;"></div>
<div class="a" style="left:0.0px;top:219.4px;width:860.0px;height:11.0px;background:#fafafa;"></div>
<div class="a" style="left:0.0px;top:219.4px;width:860.0px;height:1.0px;background:#efefef;"></div>
<div class="a" style="left:2.0px;top:221.8px;width:602.0px;height:5.7px;background:#acacac;border-radius:2.9px;"></div>
<div class="a" style="left:0.0px;top:229.6px;width:860.0px;height:2.4px;background:#e6e6e6;"></div>
<div class="a" style="left:0.0px;top:232.0px;width:860.0px;height:31.0px;background:#f4f4f4;"></div>
<div class="btn" style="left:6.8px;top:237.6px;width:38.3px;height:18.8px;"></div>
<svg class="a" style="left:11.0px;top:241.5px" width="12" height="12" viewBox="0 0 12 12"><path d="M1 0.6 H6.2 L8.4 2.8 V10.6 H1 Z" fill="#e9f1f8" stroke="#8aa6bd" stroke-width="0.9"/><path d="M4 9.6 L4.6 7.2 L9.6 2.2 L11.2 3.8 L6.2 8.8 Z" fill="#e0a647" stroke="#8a5a1f" stroke-width="0.6"/><path d="M4 9.6 L4.5 7.6 L5.9 9 Z" fill="#5a4630"/></svg>
<div class="tx" style="left:26.5px;top:241.6px;font-size:8.8px;color:#2a2a2a;font-weight:bold;letter-spacing:-0.673px;">Edit</div>
<div class="btn" style="left:47.7px;top:237.6px;width:27.0px;height:18.8px;"></div>
<svg class="a" style="left:50.8px;top:241.2px" width="12" height="12" viewBox="0 0 12 12"><g transform="translate(6 6)"><rect x="-1.05" y="-5.0" width="2.1" height="2.4" transform="rotate(0)" fill="#6a6a6a"/><rect x="-1.05" y="-5.0" width="2.1" height="2.4" transform="rotate(45)" fill="#6a6a6a"/><rect x="-1.05" y="-5.0" width="2.1" height="2.4" transform="rotate(90)" fill="#6a6a6a"/><rect x="-1.05" y="-5.0" width="2.1" height="2.4" transform="rotate(135)" fill="#6a6a6a"/><rect x="-1.05" y="-5.0" width="2.1" height="2.4" transform="rotate(180)" fill="#6a6a6a"/><rect x="-1.05" y="-5.0" width="2.1" height="2.4" transform="rotate(225)" fill="#6a6a6a"/><rect x="-1.05" y="-5.0" width="2.1" height="2.4" transform="rotate(270)" fill="#6a6a6a"/><rect x="-1.05" y="-5.0" width="2.1" height="2.4" transform="rotate(315)" fill="#6a6a6a"/><circle r="3.0" fill="none" stroke="#6a6a6a" stroke-width="1.8"/></g></svg>
<svg class="a" style="left:66.1px;top:245.4px" width="4.6" height="3.2" viewBox="0 0 4.6 3.2"><path d="M0 0 H4.6 L2.3 3.2 Z" fill="#333"/></svg>
<div class="a" style="left:77.0px;top:237.6px;width:1.0px;height:18.8px;background:transparent;border-left:1px dotted #cfcfcf;"></div>
<div class="btn" style="left:81.0px;top:237.6px;width:40.2px;height:18.8px;"></div>
<svg class="a" style="left:85.6px;top:242.0px" width="10" height="10" viewBox="0 0 10 10"><rect x="0.6" y="0.6" width="8.8" height="8.8" rx="1" fill="#dfe7ee" stroke="#b7c6d3" stroke-width="1"/><rect x="2.4" y="0.8" width="5.2" height="3" fill="#f4f7fa"/><rect x="2.2" y="5.6" width="5.6" height="3.6" fill="#c6d4e0"/></svg>
<div class="tx" style="left:100.0px;top:242.0px;font-size:8.8px;color:#b5b9bc;font-weight:bold;letter-spacing:-1.317px;">Save</div>
<div class="btn" style="left:121.2px;top:237.6px;width:10.8px;height:18.8px;"></div>
<svg class="a" style="left:124.8px;top:245.5px" width="4.4" height="3" viewBox="0 0 4.4 3"><path d="M0 0 H4.4 L2.2 3 Z" fill="#b0b0b0"/></svg>
<div class="btn" style="left:136.5px;top:237.6px;width:48.2px;height:18.8px;"></div>
<svg class="a" style="left:140.4px;top:241.6px" width="10" height="12" viewBox="0 0 10 12"><path d="M0.8 0.6 H5.6 L8 3 V10.6 H0.8 Z" fill="#eef2f6" stroke="#c3ced8" stroke-width="0.9"/><path d="M5.4 7.4 L8.6 10.6 M8.6 7.4 L5.4 10.6" stroke="#e7a6a6" stroke-width="1.2"/></svg>
<div class="tx" style="left:155.5px;top:242.0px;font-size:8.8px;color:#b5b9bc;font-weight:bold;letter-spacing:-0.852px;">Cancel</div>
<div class="btn" style="left:189.7px;top:237.6px;width:94.3px;height:18.8px;"></div>
<svg class="a" style="left:194.2px;top:241.6px" width="10" height="12" viewBox="0 0 10 12"><path d="M0.6 0.6 H6.4 L9.4 3.6 V11.4 H0.6 Z" fill="#3d97cf"/><path d="M6.4 0.6 V3.6 H9.4 Z" fill="#bfe0f4"/><rect x="2" y="5.4" width="5.4" height="0.9" fill="#9fd0ee"/><rect x="2" y="7.4" width="5.4" height="0.9" fill="#9fd0ee"/></svg>
<div class="tx" style="left:208.6px;top:242.0px;font-size:8.8px;color:#2a2a2a;font-weight:bold;letter-spacing:-0.468px;">Open in Document</div>
<div class="btn" style="left:284.0px;top:237.6px;width:11.0px;height:18.8px;"></div>
<svg class="a" style="left:287.2px;top:245.5px" width="4.4" height="3" viewBox="0 0 4.4 3"><path d="M0 0 H4.4 L2.2 3 Z" fill="#333"/></svg>
<svg class="a" style="left:666.6px;top:241.2px" width="12" height="12" viewBox="0 0 12 12"><path d="M1.6 0.8 H10.4 Q11.4 0.8 11.4 1.8 V6.6 Q11.4 7.6 10.4 7.6 H6.4 L3.4 10.8 V7.6 H1.6 Q0.6 7.6 0.6 6.6 V1.8 Q0.6 0.8 1.6 0.8 Z" fill="#757575"/><circle cx="3.4" cy="4.2" r="0.8" fill="#f5f5f5"/><circle cx="6" cy="4.2" r="0.8" fill="#f5f5f5"/><circle cx="8.6" cy="4.2" r="0.8" fill="#f5f5f5"/></svg>
<svg class="a" style="left:687.6px;top:241.6px" width="11" height="11" viewBox="0 0 11 11"><g fill="none" stroke="#7b7b7b" stroke-width="1.5" stroke-linecap="round"><path d="M4.6 6.4 L6.4 4.6"/><path d="M5.2 3.4 L6.8 1.8 A1.7 1.7 0 0 1 9.2 4.2 L7.6 5.8"/><path d="M5.8 7.6 L4.2 9.2 A1.7 1.7 0 0 1 1.8 6.8 L3.4 5.2"/></g></svg>
<svg class="a" style="left:709.2px;top:241.4px" width="11" height="12" viewBox="0 0 11 12"><path d="M9.4 5.2 L5.2 9.6 A2.3 2.3 0 0 1 1.8 6.4 L6.4 1.6 A1.6 1.6 0 0 1 8.8 3.8 L4.6 8.2 A0.8 0.8 0 0 1 3.4 7.2 L7 3.4" fill="none" stroke="#7b7b7b" stroke-width="1.3" stroke-linecap="round"/></svg>
<div class="btn" style="left:744.4px;top:237.6px;width:20.0px;height:18.8px;"></div>
<svg class="a" style="left:749.4px;top:242.6px" width="10" height="10" viewBox="0 0 10 10"><path d="M0.4 0.6 H9.6 L6 4.6 V9.4 L4 8 V4.6 Z" fill="#555"/></svg>
<div class="btn" style="left:766.9px;top:237.6px;width:19.5px;height:18.8px;"></div>
<svg class="a" style="left:770.9px;top:241.6px" width="11" height="11" viewBox="0 0 11 11"><circle cx="5.5" cy="5.5" r="4.3" fill="none" stroke="#555" stroke-width="1.3"/><path d="M5.5 2.8 V5.8 H7.8" fill="none" stroke="#555" stroke-width="1.2"/></svg>
<div class="a" style="left:789.0px;top:237.6px;width:1.0px;height:18.8px;background:transparent;border-left:1px dotted #cfcfcf;"></div>
<div class="btn" style="left:792.4px;top:237.6px;width:19.8px;height:18.8px;"></div>
<svg class="a" style="left:799.6px;top:244.0px" width="5" height="7" viewBox="0 0 5 7"><path d="M4.6 0.2 V6.8 L0.4 3.5 Z" fill="#333"/></svg>
<div class="btn" style="left:812.2px;top:237.6px;width:19.5px;height:18.8px;"></div>
<svg class="a" style="left:819.8px;top:244.0px" width="5" height="7" viewBox="0 0 5 7"><path d="M0.4 0.2 V6.8 L4.6 3.5 Z" fill="#333"/></svg>
<div class="btn" style="left:834.5px;top:237.6px;width:27.5px;height:18.8px;"></div>
<svg class="a" style="left:837.0px;top:241.2px" width="12" height="12" viewBox="0 0 12 12"><g transform="translate(6 6.4)"><path d="M2.23 -2.17 A3.1 3.1 0 1 0 3.1 0.93" fill="none" stroke="#555" stroke-width="1.6"/><path d="M4.00 -4.20 V-0.6 H0.10 Z" fill="#555"/></g></svg>
<svg class="a" style="left:855.8px;top:245.5px" width="4.4" height="3" viewBox="0 0 4.4 3"><path d="M0 0 H4.4 L2.2 3 Z" fill="#333"/></svg>
<div class="a" style="left:6.8px;top:262.4px;width:842.0px;height:26.2px;background:#e5ebf2;"></div>
<svg class="a" style="left:15.0px;top:265.0px" width="23" height="19" viewBox="0 0 23 19"><path d="M0.6 6.2 L8.2 0.8 V3.6 H13.2 V8.6 H8.2 V11.9 Z" fill="#0b4669"/><path d="M21.8 11.8 L14.4 6.3 V9.4 H9.1 V14.4 H14.4 V17.4 Z" fill="#0b4669"/></svg>
<div class="tx" style="left:44.4px;top:268.5px;font-size:11.4px;color:#0e4163;font-weight:bold;letter-spacing:-0.691px;-webkit-text-stroke:0.25px #0e4163;">Linked Revisions</div>
<svg class="a" style="left:833.1px;top:269.3px" width="11" height="11" viewBox="0 0 11 11"><path d="M0.8 10.2 L1.4 7.4 L7.4 1.4 L9.6 3.6 L3.6 9.6 Z" fill="#5f89a6"/><path d="M8.2 0.7 A0.8 0.8 0 0 1 9.3 0.7 L10.3 1.7 A0.8 0.8 0 0 1 10.3 2.8 L9.9 3.2 L7.8 1.1 Z" fill="#5f89a6"/></svg>
<div class="a" style="left:6.8px;top:303.0px;width:842.0px;height:28.8px;background:#e5ebf2;"></div>
<svg class="a" style="left:18.0px;top:308.6px" width="17" height="17" viewBox="0 0 17 17"><g fill="none" stroke="#0e4163" stroke-width="2.3" stroke-linecap="round"><path d="M6.8 10.2 L10.2 6.8"/><path d="M7.6 5 L10 2.6 A2.9 2.9 0 0 1 14.4 7 L12 9.4"/><path d="M9.4 12 L7 14.4 A2.9 2.9 0 0 1 2.6 10 L5 7.6"/></g></svg>
<div class="tx" style="left:44.4px;top:311.3px;font-size:11.4px;color:#0e4163;font-weight:bold;letter-spacing:-0.409px;-webkit-text-stroke:0.25px #0e4163;">Linked Work Items</div>
<svg class="a" style="left:794.9px;top:312.3px" width="11" height="11" viewBox="0 0 11 11"><path d="M0.8 10.2 L1.4 7.4 L7.4 1.4 L9.6 3.6 L3.6 9.6 Z" fill="#5f89a6"/><path d="M8.2 0.7 A0.8 0.8 0 0 1 9.3 0.7 L10.3 1.7 A0.8 0.8 0 0 1 10.3 2.8 L9.9 3.2 L7.8 1.1 Z" fill="#5f89a6"/></svg>
<svg class="a" style="left:813.4px;top:312.6px" width="12" height="11" viewBox="0 0 12 11"><path d="M0.8 2.6 H5 V3.8 H2 V9.2 H9 V7.4 H10.2 V10.4 H0.8 Z" fill="#5f89a6"/><path d="M7.4 0.4 L11.6 3.6 L7.4 6.8 V4.8 Q4.6 4.8 3.6 7.4 Q3.6 2.6 7.4 2.4 Z" fill="#5f89a6"/></svg>
<svg class="a" style="left:832.8px;top:313.2px" width="11" height="11" viewBox="0 0 11 11"><path d="M8.2 3.4 A3.2 3.2 0 1 0 8.6 6.9" fill="none" stroke="#5f89a6" stroke-width="2.1"/><path d="M9.9 1.2 V5 H6.3 Z" fill="#5f89a6"/></svg>
<div class="tx" style="left:16.2px;top:335.9px;font-size:8.8px;color:#606060;letter-spacing:-0.366px;">Suspect</div>
<div class="tx" style="left:82.0px;top:335.9px;font-size:8.8px;color:#606060;letter-spacing:-0.5px;">Role</div>
<div class="tx" style="left:174.3px;top:335.9px;font-size:8.8px;color:#606060;letter-spacing:-0.025px;">Title</div>
<div class="tx" style="left:562.3px;top:335.9px;font-size:8.8px;color:#606060;letter-spacing:-0.031px;">Project</div>
<div class="tx" style="left:648.4px;top:335.9px;font-size:8.8px;color:#606060;letter-spacing:-0.221px;">Revision</div>
<div class="tx" style="left:700.2px;top:335.9px;font-size:8.8px;color:#606060;letter-spacing:-0.21px;">Status</div>
<div class="tx" style="left:752.8px;top:335.9px;font-size:8.8px;color:#606060;letter-spacing:-0.266px;">Assignee(s)</div>
<div class="a" style="left:13.0px;top:351.0px;width:829.0px;height:1.0px;background:transparent;border-top:1px dotted #d4d4d4;"></div>
<div class="a" style="left:13.0px;top:372.6px;width:829.0px;height:1.0px;background:transparent;border-top:1px dotted #d4d4d4;"></div>
<div class="a" style="left:13.0px;top:394.2px;width:829.0px;height:1.0px;background:transparent;border-top:1px dotted #d4d4d4;"></div>
<div class="a" style="left:13.0px;top:416.0px;width:829.0px;height:1.0px;background:transparent;border-top:1px dotted #d4d4d4;"></div>
<div class="a" style="left:13.0px;top:437.8px;width:829.0px;height:1.0px;background:transparent;border-top:1px dotted #d4d4d4;"></div>
<div class="tx" style="left:81.8px;top:356.5px;font-size:9.2px;color:#161616;letter-spacing:-0.291px;-webkit-text-stroke:0.28px #161616;">requires</div>
<svg class="a" style="left:176.4px;top:358.0px" width="6" height="10" viewBox="0 0 6 10"><path d="M0.6 0.5 H5.4 V9.4 L3 7.4 L0.6 9.4 Z" fill="#e6e6e6" stroke="#9a9a9a" stroke-width="0.9"/></svg>
<div class="tx" style="left:186.4px;top:356.5px;font-size:9.2px;color:#111;letter-spacing:-0.973px;-webkit-text-stroke:0.28px #111;">CER-741</div>
<div class="tx" style="left:222.4px;top:356.5px;font-size:9.2px;color:#6f7f8a;">-</div>
<div class="tx" style="left:227.3px;top:356.5px;font-size:9.2px;color:#2c6d95;letter-spacing:-0.425px;-webkit-text-stroke:0.15px #2c6d95;">Requirements</div>
<div class="tx" style="left:562.3px;top:356.5px;font-size:9.2px;color:#161616;letter-spacing:-0.208px;-webkit-text-stroke:0.28px #161616;">Tricorder</div>
<svg class="a" style="left:701.0px;top:357.4px" width="10" height="11" viewBox="0 0 10 11"><ellipse cx="6.8" cy="5.2" rx="2.3" ry="4.7" fill="#25a825"/><ellipse cx="3.3" cy="6.2" rx="2.5" ry="2.1" fill="#25a825"/><circle cx="6.2" cy="6.6" r="1.2" fill="#49c049"/></svg>
<div class="tx" style="left:81.8px;top:378.3px;font-size:9.2px;color:#161616;letter-spacing:-0.202px;-webkit-text-stroke:0.28px #161616;">is required by</div>
<svg class="a" style="left:174.6px;top:379.7px" width="9.4" height="9.4" viewBox="0 0 9.4 9.4"><rect x="0.6" y="0.6" width="8.2" height="8.2" rx="1.3" fill="url(#gwi)" stroke="#3b1f47" stroke-width="1.2"/><path d="M2.4 2.6 H7 L4.2 6.6" fill="none" stroke="#4d2360" stroke-width="1.1"/><path d="M4.6 7.4 L7.6 4.4 V7.4 Z" fill="#edcdf3" opacity="0.8"/></svg>
<div class="tx" style="left:186.4px;top:378.3px;font-size:9.2px;color:#8e1c1c;letter-spacing:-0.973px;-webkit-text-stroke:0.28px #8e1c1c;">CER-279</div>
<div class="tx" style="left:222.4px;top:378.3px;font-size:9.2px;color:#c97a38;">-</div>
<div class="tx" style="left:227.3px;top:378.3px;font-size:9.2px;color:#c97a38;letter-spacing:-0.331px;-webkit-text-stroke:0.15px #c97a38;">Third Party Security Updates - AP154</div>
<div class="tx" style="left:562.3px;top:378.3px;font-size:9.2px;color:#161616;letter-spacing:-0.208px;-webkit-text-stroke:0.28px #161616;">Tricorder</div>
<svg class="a" style="left:705.2px;top:379.4px" width="5" height="10" viewBox="0 0 5 10"><g fill="#9fc6e0" opacity="1"><circle cx="2.5" cy="1.5" r="1.4"/><rect x="0.3" y="3" width="4.4" height="4" rx="1"/><rect x="1" y="6" width="3" height="4" rx="0.6"/></g></svg>
<div class="tx" style="left:712.6px;top:378.3px;font-size:9.2px;color:#161616;letter-spacing:-0.084px;-webkit-text-stroke:0.28px #161616;">Draft</div>
<div class="tx" style="left:752.8px;top:378.3px;font-size:9.2px;color:#161616;letter-spacing:-0.523px;-webkit-text-stroke:0.28px #161616;">Jahnavi Shah</div>
<div class="tx" style="left:81.8px;top:399.7px;font-size:9.2px;color:#161616;letter-spacing:-0.202px;-webkit-text-stroke:0.28px #161616;">is required by</div>
<svg class="a" style="left:174.6px;top:401.1px" width="9.4" height="9.4" viewBox="0 0 9.4 9.4"><rect x="0.6" y="0.6" width="8.2" height="8.2" rx="1.3" fill="url(#gwi)" stroke="#3b1f47" stroke-width="1.2"/><path d="M2.4 2.6 H7 L4.2 6.6" fill="none" stroke="#4d2360" stroke-width="1.1"/><path d="M4.6 7.4 L7.6 4.4 V7.4 Z" fill="#edcdf3" opacity="0.8"/></svg>
<div class="tx" style="left:186.4px;top:399.7px;font-size:9.2px;color:#8e1c1c;letter-spacing:-0.973px;-webkit-text-stroke:0.28px #8e1c1c;">CER-278</div>
<div class="tx" style="left:222.4px;top:399.7px;font-size:9.2px;color:#6f7f8a;">-</div>
<div class="tx" style="left:227.3px;top:399.7px;font-size:9.2px;color:#2c6d95;letter-spacing:-0.354px;-webkit-text-stroke:0.15px #2c6d95;">Security Updates - AP153</div>
<div class="tx" style="left:562.3px;top:399.7px;font-size:9.2px;color:#161616;letter-spacing:-0.208px;-webkit-text-stroke:0.28px #161616;">Tricorder</div>
<svg class="a" style="left:705.2px;top:400.8px" width="5" height="10" viewBox="0 0 5 10"><g fill="#9fc6e0" opacity="1"><circle cx="2.5" cy="1.5" r="1.4"/><rect x="0.3" y="3" width="4.4" height="4" rx="1"/><rect x="1" y="6" width="3" height="4" rx="0.6"/></g></svg>
<div class="tx" style="left:712.6px;top:399.7px;font-size:9.2px;color:#161616;letter-spacing:-0.084px;-webkit-text-stroke:0.28px #161616;">Draft</div>
<div class="tx" style="left:81.8px;top:422.1px;font-size:9.2px;color:#161616;letter-spacing:-0.218px;-webkit-text-stroke:0.28px #161616;">is verified by</div>
<svg class="a" style="left:174.6px;top:423.5px" width="9.4" height="9.4" viewBox="0 0 9.4 9.4"><rect x="0.6" y="0.6" width="8.2" height="8.2" rx="1.6" fill="#d9d38e" stroke="#4a4a2a" stroke-width="1.1"/><circle cx="4.4" cy="3" r="1.5" fill="#111"/><circle cx="6.4" cy="6.2" r="1.5" fill="#111"/><circle cx="2.8" cy="6" r="1.1" fill="#222"/><circle cx="6.6" cy="2.6" r="0.8" fill="#f6f3c8"/></svg>
<div class="tx" style="left:186.4px;top:422.1px;font-size:9.2px;color:#111;letter-spacing:-0.973px;-webkit-text-stroke:0.28px #111;">CER-314</div>
<div class="tx" style="left:222.4px;top:422.1px;font-size:9.2px;color:#6f7f8a;">-</div>
<div class="tx" style="left:227.3px;top:422.1px;font-size:9.2px;color:#2c6d95;letter-spacing:-0.161px;-webkit-text-stroke:0.15px #2c6d95;">Verify Upgrade Authentication</div>
<div class="tx" style="left:562.3px;top:422.1px;font-size:9.2px;color:#161616;letter-spacing:-0.208px;-webkit-text-stroke:0.28px #161616;">Tricorder</div>
<svg class="a" style="left:705.2px;top:423.2px" width="5" height="10" viewBox="0 0 5 10"><g fill="#9fc6e0" opacity="1"><circle cx="2.5" cy="1.5" r="1.4"/><rect x="0.3" y="3" width="4.4" height="4" rx="1"/><rect x="1" y="6" width="3" height="4" rx="0.6"/></g></svg>
<div class="tx" style="left:712.6px;top:422.1px;font-size:9.2px;color:#161616;letter-spacing:-0.084px;-webkit-text-stroke:0.28px #161616;">Draft</div>
<svg class="a" style="left:261.2px;top:382.6px" width="8" height="14" viewBox="0 0 8 14"><path d="M0.6 0.6 V11 L3 8.8 L4.8 12.8 L6.4 12 L4.6 8.2 H7.6 Z" fill="#111" stroke="#fff" stroke-width="0.7"/></svg>
<div class="a" style="left:6.8px;top:451.6px;width:842.0px;height:29.0px;background:#e5ebf2;"></div>
<svg class="a" style="left:17.5px;top:458.5px" width="17" height="17" viewBox="0 0 17 17"><circle cx="8.5" cy="8.5" r="7.3" fill="#e9eff6" stroke="#0e4163" stroke-width="1.8"/><g fill="#0e4163" stroke="#0e4163" stroke-width="0.6" stroke-linejoin="round"><path d="M0.9 6.4 L1.5 3.5 L3.9 1.4 L7.4 0.9 L9.1 1.7 L7.7 3.2 L8.3 4.4 L6.2 5.3 L5 7.3 L2.7 8.2 Z"/><path d="M12.1 3.2 L14.4 4.1 L16.2 7 L16.2 10.6 L14.7 11.7 L12.7 10.6 L10.9 11.1 L10 9.4 L11.5 7.3 L10.9 5.6 Z"/><path d="M5.6 9.1 L8 8.8 L9.7 10.6 L8.9 12.9 L7.7 15.9 L6.2 15.6 L6.5 12.9 L5.3 11.1 Z"/></g></svg>
<div class="tx" style="left:44.4px;top:461.1px;font-size:11.4px;color:#0e4163;font-weight:bold;letter-spacing:-0.521px;-webkit-text-stroke:0.25px #0e4163;">Hyperlinks</div>
<svg class="a" style="left:833.1px;top:461.3px" width="11" height="11" viewBox="0 0 11 11"><path d="M0.8 10.2 L1.4 7.4 L7.4 1.4 L9.6 3.6 L3.6 9.6 Z" fill="#5f89a6"/><path d="M8.2 0.7 A0.8 0.8 0 0 1 9.3 0.7 L10.3 1.7 A0.8 0.8 0 0 1 10.3 2.8 L9.9 3.2 L7.8 1.1 Z" fill="#5f89a6"/></svg>
<div class="a" style="left:6.8px;top:495.2px;width:842.0px;height:20.0px;background:#e5ebf2;"></div>
<svg class="a" style="left:17.6px;top:500.4px" width="17" height="17" viewBox="0 0 17 17"><path d="M14 7.4 L8 13.6 A3.4 3.4 0 0 1 3 9 L9.6 2.2 A2.4 2.4 0 0 1 13.2 5.4 L7 11.8 A1.2 1.2 0 0 1 5.2 10.2 L10.4 4.8" fill="none" stroke="#0e4163" stroke-width="1.7" stroke-linecap="round"/></svg>
<div class="tx" style="left:44.4px;top:503.6px;font-size:11.4px;color:#0e4163;font-weight:bold;letter-spacing:-0.485px;-webkit-text-stroke:0.25px #0e4163;">Attachments</div>
<svg class="a" style="left:833.1px;top:503.5px" width="11" height="11" viewBox="0 0 11 11"><path d="M0.8 10.2 L1.4 7.4 L7.4 1.4 L9.6 3.6 L3.6 9.6 Z" fill="#5f89a6"/><path d="M8.2 0.7 A0.8 0.8 0 0 1 9.3 0.7 L10.3 1.7 A0.8 0.8 0 0 1 10.3 2.8 L9.9 3.2 L7.8 1.1 Z" fill="#5f89a6"/></svg>
<div class="a" style="left:855.8px;top:262.0px;width:4.2px;height:248.0px;background:#f7f7f7;border-left:1px solid #ededed;"></div>
<div class="a" style="left:858.2px;top:479.4px;width:2.2px;height:31.0px;background:#a4a4a4;border-radius:1.1px 1.1px 0 0;"></div>
</div>
</body></html>
